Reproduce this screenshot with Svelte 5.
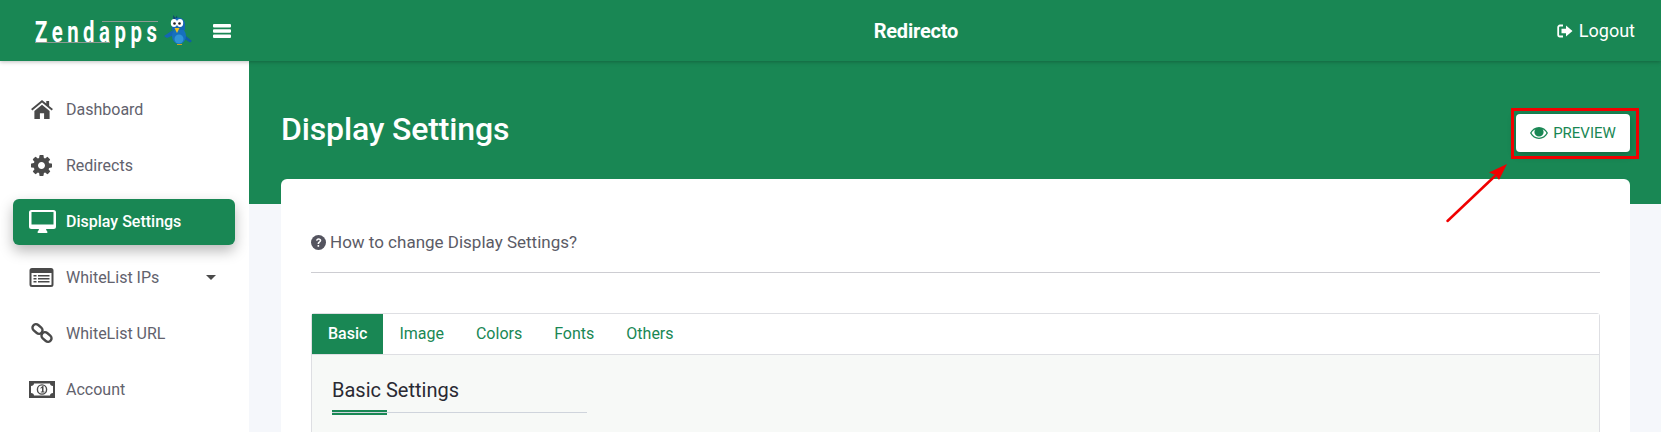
<script>
  const tabs = ['Basic', 'Image', 'Colors', 'Fonts', 'Others'];
</script>

<div class="page">
  <header class="topbar">
    <div class="brand">
      <span class="logo"><span class="logo-text">Zendapps</span></span>
      <svg class="bird" width="30" height="32" viewBox="0 0 30 32" aria-hidden="true">
        <path d="M10 1l2.500 3 1.500-2.500.5 4.500h-4z" fill="#0d3f73"/>
        <path d="M1 22l9-6 1 5-7 3z" fill="#1566b3"/>
        <path d="M17 17l12 10-2 1.500-11-7z" fill="#0f5ea6"/>
        <ellipse cx="16" cy="22" rx="7" ry="8" fill="#1670bd"/>
        <ellipse cx="16" cy="25" rx="4.500" ry="4.500" fill="#2f93d8"/>
        <path d="M9 10a6.500 6.500 0 0 1 13 0v6H9z" fill="#1566b3"/>
        <ellipse cx="11" cy="9" rx="3.200" ry="4" fill="#fff"/>
        <ellipse cx="17" cy="9" rx="3.200" ry="4" fill="#fff"/>
        <circle cx="11.500" cy="9.500" r="1.300" fill="#222"/>
        <circle cx="16.500" cy="9.500" r="1.300" fill="#222"/>
        <path d="M11.500 14h5l-2.500 5z" fill="#f2c21b"/>
        <path d="M14 30h5v1h-5z" fill="#c9a227"/>
      </svg>
      <svg class="burger" width="18" height="14" viewBox="0 0 18 14" aria-hidden="true">
        <path d="M1 0h16a1 1 0 0 1 1 1v1.500a1 1 0 0 1-1 1H1a1 1 0 0 1-1-1V1a1 1 0 0 1 1-1zm0 5.200h16a1 1 0 0 1 1 1v1.500a1 1 0 0 1-1 1H1a1 1 0 0 1-1-1V6.200a1 1 0 0 1 1-1zm0 5.300h16a1 1 0 0 1 1 1V13a1 1 0 0 1-1 1H1a1 1 0 0 1-1-1v-1.500a1 1 0 0 1 1-1z" fill="#fff"/>
      </svg>
    </div>
    <div class="app-name">Redirecto</div>
    <div class="logout">
      <svg width="16" height="14" viewBox="0 0 16 14" aria-hidden="true">
        <path d="M6 1.500H3A1.800 1.800 0 0 0 1.200 3.300v7.400A1.800 1.800 0 0 0 3 12.500h3" fill="none" stroke="#fff" stroke-width="1.800"/>
        <path d="M4.500 4.800H9V1.500L15.500 7 9 12.500V9.200H4.500z" fill="#fff"/>
      </svg>
      <span>Logout</span>
    </div>
  </header>

  <div class="body">
    <nav class="sidebar">
      <div class="item">
        <span class="ico">
          <svg width="22" height="19" viewBox="0 0 23 20"><path d="M11.500 0L0 9.500l1.300 1.600L11.500 2.700l10.200 8.400L23 9.500l-4-3.300V1h-3v2.700zM3.500 11.500V20h5.800v-6h4.400v6h5.800v-8.500l-8-6.500z" fill="#4a4a4a"/></svg>
        </span>Dashboard
      </div>
      <div class="item">
        <span class="ico">
          <svg width="21" height="21" viewBox="128 128 1536 1536"><path d="M1152 896q0-106-75-181t-181-75-181 75-75 181 75 181 181 75 181-75 75-181zm512-109v222q0 12-8 23t-20 13l-185 28q-19 54-39 91 35 50 107 138 10 12 10 25t-9 23q-27 37-99 108t-94 71q-12 0-26-9l-138-108q-44 23-91 38-16 136-29 186-7 28-36 28h-222q-14 0-24.500-8.500t-11.500-21.500l-28-184q-49-16-90-37l-141 107q-10 9-25 9-14 0-25-11-126-114-165-168-7-10-7-23 0-12 8-23 15-21 51-66.500t54-70.500q-27-50-41-99l-183-27q-13-2-21-12.500t-8-23.500v-222q0-12 8-23t19-13l186-28q14-46 39-92-40-57-107-138-10-12-10-24 0-10 9-23 26-36 98.500-107.500t94.500-71.500q13 0 26 10l138 107q44-23 91-38 16-136 29-186 7-28 36-28h222q14 0 24.500 8.500t11.500 21.500l28 184q49 16 90 37l142-107q9-9 24-9 13 0 25 10 129 119 165 170 7 8 7 22 0 12-8 23-15 21-51 66.500t-54 70.500q26 50 41 98l183 28q13 2 21 12.500t8 23.500z" fill="#4a4a4a"/></svg>
        </span>Redirects
      </div>
      <div class="item active">
        <span class="ico wide">
          <svg width="27" height="23" viewBox="0 0 27 23"><path fill-rule="evenodd" d="M2.500 0h22A2.500 2.500 0 0 1 27 2.500v14a2.500 2.500 0 0 1-2.500 2.500H17c.2 1.500 1.500 2.500 1.500 3.200 0 .5-.3.800-.8.800H9.300c-.5 0-.8-.3-.8-.8 0-.7 1.300-1.700 1.500-3.200H2.500A2.500 2.500 0 0 1 0 16.500v-14A2.500 2.500 0 0 1 2.500 0zM2.500 2v12.500h22V2z" fill="#fff"/></svg>
        </span>Display Settings
      </div>
      <div class="item">
        <span class="ico wide">
          <svg width="25" height="19" viewBox="0 0 24 19"><path fill-rule="evenodd" d="M2.500 0h19A2.500 2.500 0 0 1 24 2.500v14a2.500 2.500 0 0 1-2.500 2.500h-19A2.500 2.500 0 0 1 0 16.500v-14A2.500 2.500 0 0 1 2.500 0zM2 5v11.500c0 .3.200.5.500.5h19c.3 0 .5-.2.500-.5V5zm2 2h3v1.500H4zm0 3h3v1.500H4zm0 3h3v1.500H4zm4.500-6H20v1.500H8.500zm0 3H20v1.500H8.500zm0 3H20v1.500H8.500z" fill="#4a4a4a"/></svg>
        </span>WhiteList IPs
        <svg class="caret" width="10" height="5" viewBox="0 0 10 5"><path d="M0 0h10L5 5z" fill="#4a4a4a"/></svg>
      </div>
      <div class="item">
        <span class="ico">
          <svg width="22" height="22" viewBox="0 0 22 22"><g fill="none" stroke="#4a4a4a" stroke-width="2.400"><rect x="1" y="3.500" width="11" height="7" rx="3.500" transform="rotate(40 6.500 7)"/><rect x="10" y="11.500" width="11" height="7" rx="3.500" transform="rotate(40 15.500 15)"/></g></svg>
        </span>WhiteList URL
      </div>
      <div class="item">
        <span class="ico wide">
          <svg width="26" height="17" viewBox="0 0 26 17"><path fill-rule="evenodd" d="M0 0h26v17H0zM5 2.500c0 1.500-1.200 2.500-3 2.500v7c1.800 0 3 1 3 2.500h16c0-1.500 1.200-2.500 3-2.500V5c-1.800 0-3-1-3-2.500z" fill="#4a4a4a"/><circle cx="13" cy="8.500" r="4.600" fill="#fff" stroke="#4a4a4a" stroke-width="1.400"/><path d="M11.300 7l2.200-2h1v5.500h1v1h-3.700v-1h1.200V6.700l-1.100 1z" fill="#4a4a4a"/></svg>
        </span>Account
      </div>
    </nav>

    <main class="main">
      <section class="banner">
        <h1>Display Settings</h1>
        <button class="preview">
          <svg width="18" height="12" viewBox="0 0 18 12"><path fill-rule="evenodd" d="M9 0c3.800 0 7 2.300 9 6-2 3.700-5.200 6-9 6s-7-2.300-9-6c2-3.700 5.200-6 9-6zM1.500 6C3.200 8.900 5.800 10.700 9 10.700s5.800-1.800 7.500-4.700c-1-1.700-2.300-3-3.900-3.800.6.800 1 1.800 1 2.800a4.600 4.600 0 0 1-9.200 0c0-1 .4-2 1-2.800C3.800 3 2.500 4.300 1.500 6z" fill="#198754"/></svg>
          PREVIEW
        </button>
      </section>

      <section class="card">
        <div class="howto">
          <svg width="15" height="15" viewBox="0 0 14 14"><circle cx="7" cy="7" r="7" fill="#54545f"/><path d="M4.600 5.200C4.800 3.900 5.800 3 7.100 3c1.400 0 2.500.9 2.500 2.100 0 1.800-2 1.700-2 3.200H6.100c0-2 2-2 2-3.100 0-.5-.4-.8-1-.8-.6 0-1 .4-1.100 1zM6.100 9.300h1.500v1.600H6.100z" fill="#fff"/></svg>
          <span>How to change Display Settings?</span>
        </div>
        <div class="rule"></div>
        <div class="panel">
          <div class="tabs">
            {#each tabs as t, i}
              <div class="tab" class:on={i === 0}>{t}</div>
            {/each}
          </div>
          <div class="pane">
            <h2>Basic Settings</h2>
            <div class="underline"><span></span></div>
          </div>
        </div>
      </section>
    </main>
  </div>

  <div class="frame"></div>
  <svg class="arrow" width="72" height="68" viewBox="0 0 72 68" aria-hidden="true">
    <path d="M2.500 60L50 15" stroke="#f00000" stroke-width="2.500" stroke-linecap="round"/>
    <path d="M62 3L54 19 50.500 14 44 11.500z" fill="#f00000"/>
  </svg>
</div>

<style>
  :global(body) {
    margin: 0;
    overflow: hidden;
    background: #f5f7fb;
  }
  .page {
    position: relative;
    width: 1661px;
    height: 432px;
    overflow: hidden;
    font-family: Roboto, "Liberation Sans", sans-serif;
    color: #5b5b66;
  }
  .topbar {
    position: relative;
    z-index: 2;
    height: 61px;
    box-sizing: border-box;
    display: flex;
    align-items: center;
    padding: 0 26px 0 35px;
    background: #198754;
    box-shadow: 0 1px 4px rgba(0, 0, 0, 0.25);
    color: #fff;
  }
  .brand {
    display: flex;
    align-items: center;
    flex: none;
  }
  .logo {
    position: relative;
    display: block;
    width: 128px;
    height: 34px;
    line-height: 34px;
    margin-top: 3px;
  }
  .logo::before {
    content: "";
    position: absolute;
    left: 0;
    top: 27px;
    width: 75px;
    height: 1px;
    background: #8f9a94;
  }
  .logo::after {
    content: "";
    position: absolute;
    left: 67px;
    top: 6px;
    width: 56px;
    height: 1px;
    background: #8f9a94;
  }
  .logo-text {
    display: inline-block;
    font-size: 29px;
    font-weight: 700;
    letter-spacing: 6.500px;
    transform: scaleX(0.7);
    transform-origin: left center;
    white-space: nowrap;
  }
  .bird {
    margin-top: -2px;
  }
  .burger {
    margin-left: 20px;
  }
  .app-name {
    flex: 1;
    text-align: center;
    padding-left: 44px;
    font-size: 20px;
    font-weight: 700;
    letter-spacing: -0.200px;
  }
  .logout {
    flex: none;
    display: flex;
    align-items: center;
    gap: 6px;
    font-size: 18px;
  }
  .body {
    display: flex;
  }
  .sidebar {
    width: 249px;
    height: 371px;
    flex: none;
    box-sizing: border-box;
    padding: 26px 14px 0 13px;
    background: #fff;
    font-size: 16px;
  }
  .item {
    display: flex;
    align-items: center;
    height: 46px;
    box-sizing: border-box;
    margin-bottom: 10px;
    padding: 0 17px 2px;
    border-radius: 6px;
    color: #62626d;
  }
  .ico {
    width: 36px;
    box-sizing: border-box;
    padding-left: 1px;
    display: flex;
    align-items: center;
    flex: none;
  }
  .ico.wide {
    padding-left: 0;
    margin-left: -1px;
    width: 37px;
  }
  .active {
    background: #198754;
    color: #fff;
    font-weight: 500;
    box-shadow: 0 6px 14px rgba(0, 0, 0, 0.28);
  }
  .caret {
    margin-left: auto;
    margin-right: 2px;
  }
  .main {
    flex: 1;
    min-width: 0;
  }
  .banner {
    height: 143px;
    box-sizing: border-box;
    display: flex;
    align-items: flex-start;
    justify-content: space-between;
    padding: 53px 31px 0 32px;
    background: #198754;
    color: #fff;
  }
  h1 {
    margin: -4px 0 0;
    font-size: 32px;
    font-weight: 500;
    line-height: 38px;
    letter-spacing: -0.150px;
  }
  .preview {
    width: 114px;
    height: 38px;
    display: flex;
    align-items: center;
    justify-content: center;
    gap: 5px;
    padding: 0;
    border: 0;
    border-radius: 4px;
    background: #fff;
    color: #198754;
    font: 400 15px Roboto, sans-serif;
    box-shadow: 0 2px 8px rgba(0, 0, 0, 0.25);
  }
  .card {
    margin: -25px 31px 0 32px;
    height: 400px;
    box-sizing: border-box;
    padding: 54px 30px 0;
    background: #fff;
    border-radius: 6px;
  }
  .howto {
    display: flex;
    align-items: center;
    gap: 4px;
    font-size: 17px;
    line-height: 19px;
    color: #5b5b66;
  }
  .rule {
    height: 1px;
    margin-top: 20px;
    background: #cdcdd2;
  }
  .panel {
    margin-top: 40px;
    border: 1px solid #dedfe3;
    border-radius: 3px 3px 0 0;
    height: 200px;
    background: #f7f9f7;
    box-sizing: border-box;
  }
  .tabs {
    display: flex;
    height: 41px;
    box-sizing: border-box;
    background: #fff;
    border-bottom: 1px solid #dedfe3;
  }
  .tab {
    padding: 0 16px;
    line-height: 40px;
    font-size: 16px;
    color: #198754;
  }
  .tab.on {
    background: #198754;
    color: #fff;
    font-weight: 500;
  }
  .pane {
    padding: 23px 20px 0;
  }
  h2 {
    margin: 0;
    font-size: 20px;
    font-weight: 400;
    line-height: 24px;
    color: #2a2a33;
  }
  .underline {
    position: relative;
    width: 255px;
    height: 1px;
    margin-top: 10px;
    background: #cfd4dc;
  }
  .underline span {
    position: absolute;
    left: 0;
    top: -2px;
    width: 55px;
    height: 1px;
    border-top: 2px solid #198754;
    border-bottom: 2px solid #198754;
  }
  .frame {
    position: absolute;
    left: 1511px;
    top: 108px;
    width: 128px;
    height: 51px;
    box-sizing: border-box;
    border: 3px solid #f00000;
    z-index: 3;
  }
  .arrow {
    position: absolute;
    left: 1445px;
    top: 161px;
    z-index: 3;
  }
</style>
